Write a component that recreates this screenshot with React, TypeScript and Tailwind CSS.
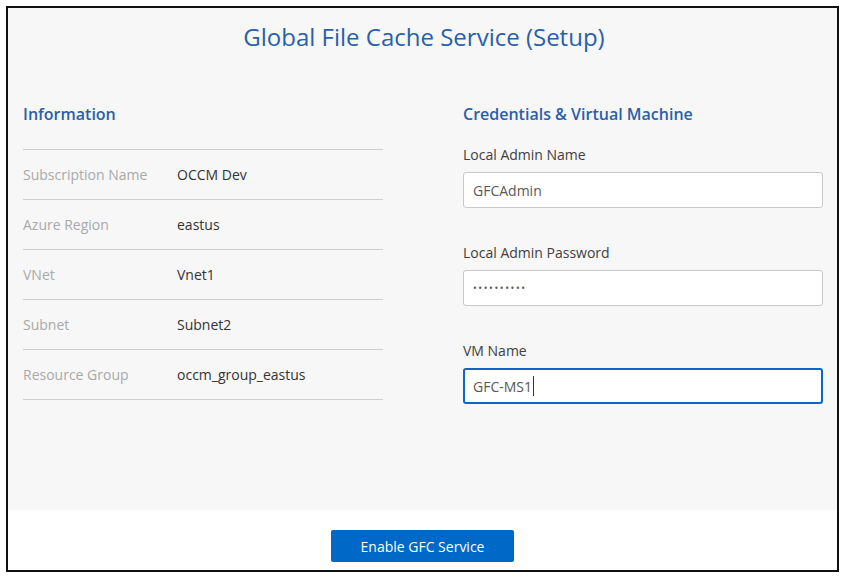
const INFO = [
  { label: "Subscription Name", value: "OCCM Dev" },
  { label: "Azure Region", value: "eastus" },
  { label: "VNet", value: "Vnet1" },
  { label: "Subnet", value: "Subnet2" },
  { label: "Resource Group", value: "occm_group_eastus" },
];

function Field({ label, children, focused }: { label: string; children: React.ReactNode; focused?: boolean }) {
  return (
    <div>
      <div className="text-[14px] leading-[20px] text-[#404040]">{label}</div>
      <div
        className={
          focused
            ? "mt-[7px] h-[36px] rounded-[3px] border-2 border-[#0a67c6] bg-white px-[8px] flex items-center text-[14px] text-[#595959]"
            : "mt-[7px] h-[36px] rounded-[3px] border border-[#c9c9c9] bg-white px-[9px] flex items-center text-[14px] text-[#595959]"
        }
      >
        {children}
      </div>
    </div>
  );
}

export default function App() {
  return (
    <div className="w-[845px] h-[577px] bg-white p-[6px] font-['Open_Sans',sans-serif]">
      <div className="h-[566px] border-2 border-[#111] flex flex-col">
        <div className="h-[502px] bg-[#f7f7f7] pl-[15px] pr-[12px] pt-[13px]">
          <h1 className="text-center text-[24px] leading-[32px] text-[#2a5faa]">
            Global File Cache Service (Setup)
          </h1>

          <div className="mt-[49px] flex gap-[80px]">
            <section className="w-[360px] shrink-0">
              <h2 className="text-[16px] leading-[24px] font-semibold text-[#2a5faa]">Information</h2>
              <div className="mt-[23px] border-t border-[#cfcfcf]">
                {INFO.map((r) => (
                  <div key={r.label} className="h-[50px] border-b border-[#cfcfcf] flex items-center text-[14px]">
                    <span className="w-[154px] text-[#a9a9a9]">{r.label}</span>
                    <span className="text-[#333]">{r.value}</span>
                  </div>
                ))}
              </div>
            </section>

            <section className="w-[360px] shrink-0">
              <h2 className="text-[16px] leading-[24px] font-semibold text-[#2a5faa]">
                Credentials &amp; Virtual Machine
              </h2>
              <div className="mt-[19px] flex flex-col gap-[35px]">
                <Field label="Local Admin Name">GFCAdmin</Field>
                <Field label="Local Admin Password">
                  <span className="text-[10px] tracking-[1.6px] text-[#555]">••••••••••</span>
                </Field>
                <Field label="VM Name" focused>
                  <span>GFC-MS1</span>
                  <span className="ml-[1px] w-px h-[20px] bg-[#333]" />
                </Field>
              </div>
            </section>
          </div>
        </div>

        <div className="flex justify-center pt-[20px]">
          <button className="w-[183px] h-[32px] rounded-[2px] bg-[#0068c6] text-white text-[14px]">
            Enable GFC Service
          </button>
        </div>
      </div>
    </div>
  );
}
